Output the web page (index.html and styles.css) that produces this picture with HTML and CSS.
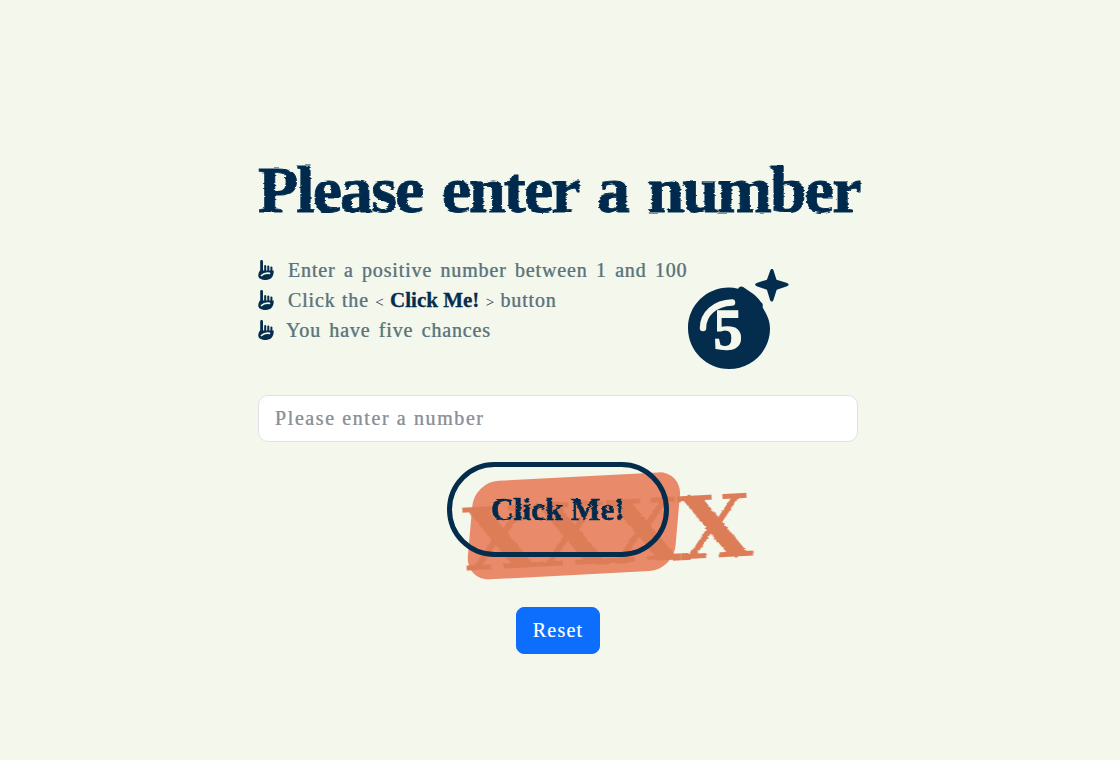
FILE: index.html
```html
<!DOCTYPE html>
<html lang="en">
<head>
<meta charset="utf-8">
<title>Guess the number</title>
<link rel="stylesheet" href="styles.css">
</head>
<body>
<svg class="defs" width="0" height="0" aria-hidden="true">
  <defs>
    <filter id="rough" x="-5%" y="-5%" width="110%" height="110%">
      <feTurbulence type="fractalNoise" baseFrequency="0.05 0.5" numOctaves="2" seed="4" result="n"/>
      <feDisplacementMap in="SourceGraphic" in2="n" scale="3" xChannelSelector="R" yChannelSelector="A"/>
    </filter>
    <symbol id="hand" viewBox="0 0 16 20">
      <rect fill="#042c4d" x="2.2" y="0" width="2.8" height="12" rx="1.4"/>
      <rect fill="#042c4d" x="6.200" y="5" width="2" height="7" rx="1"/>
      <rect fill="#042c4d" x="9.300" y="5.500" width="2" height="7" rx="1"/>
      <rect fill="#042c4d" x="12.400" y="6.500" width="2" height="6" rx="1"/>
      <path fill="#042c4d" d="M2 10.500h13.600C16.200 16 13 20 8 20 3 20 0 18 .3 15c.2-1.800.7-3.400 1.700-4.500z"/>
      <path fill="none" stroke="#f4f7ec" stroke-width="1.700" stroke-linecap="round" d="M3.500 15.500C5.500 13.500 9 13 11.500 13.300"/>
    </symbol>
  </defs>
</svg>
<main class="page">
  <h1 class="title">Please enter a number</h1>
  <div class="intro">
    <ul class="rules">
      <li class="rule"><svg class="hand"><use href="#hand"/></svg><span>Enter a positive number between 1 and 100</span></li>
      <li class="rule rule-cta"><svg class="hand"><use href="#hand"/></svg><span>Click the <span class="mark">&lt;</span> <strong class="strong">Click Me!</strong> <span class="mark">&gt;</span> button</span></li>
      <li class="rule rule-tight"><svg class="hand"><use href="#hand"/></svg><span>You have five chances</span></li>
    </ul>
    <svg class="bomb" viewBox="0 0 102 102" aria-label="Five chances left" role="img">
      <path fill="#042c4d" d="M41 19.500c3 0 6 .4 9 1.300 1.800-2.700 3.500-2.800 5.500-1.500l9.500 6.500c2.300 1.500 5.500 4.800 8 8.500 1.700 1 2.300 3 1.500 4.700C76.500 43.700 82 50 82 60.500 82 83 63.600 101 41 101S0 82.600 0 60 18.400 19.500 41 19.500z"/>
      <path fill="#042c4d" d="M84 1c.8 0 1.300.6 1.700 2l2.800 8.700 9.900 3c1.400.5 2.200 1.100 2.200 1.900 0 .9-.8 1.500-2.200 2l-9.700 3.100-3.100 9.700c-.4 1.400-1 2.200-1.800 2.200-.9 0-1.400-.8-1.900-2.200l-3-9.700-9.500-3.100c-1.400-.5-2.200-1.100-2.200-2 0-.8.800-1.400 2.200-1.900l9.500-3 3.200-8.700c.4-1.400.9-2 1.900-2z"/>
      <path fill="none" stroke="#f4f7ec" stroke-width="6.500" stroke-linecap="round" d="M15 60c0-14 12-25 29-25.500"/>
      <text class="bomb-digit" x="40" y="81">5</text>
    </svg>
  </div>
  <input class="field" type="text" placeholder="Please enter a number">
  <div class="action">
    <div class="stamp" aria-hidden="true">
      <div class="stamp-box"></div>
      <div class="stamp-x">XXXX</div>
    </div>
    <button class="click" type="button"><span class="click-label">Click Me!</span></button>
  </div>
  <button class="reset" type="button">Reset</button>
</main>
</body>
</html>
```
FILE: styles.css
```css
* { box-sizing: border-box; }
html, body { margin: 0; height: 100%; }
body {
  background: #f4f7ec;
  color: #042c4d;
  font-family: "Liberation Serif", "DejaVu Serif", serif;
}
.defs { position: absolute; }
.page {
  width: 600px;
  margin: 0 auto;
  transform: translateX(-2px);
  padding-top: 151px;
  display: flex;
  flex-direction: column;
  align-items: center;
}
.title {
  margin: 0 0 26px;
  width: 100%;
  text-align: center;
  white-space: nowrap;
  font-size: 66px;
  line-height: 78px;
  font-weight: 700;
  letter-spacing: -1.95px;
  word-spacing: 5px;
  -webkit-text-stroke: 0.8px #042c4d;
  filter: url(#rough);
}
.intro {
  width: 100%;
  display: flex;
  align-items: flex-start;
  height: 140px;
}
.rules {
  list-style: none;
  margin: 0;
  padding: 0;
  width: 430px;
  flex: none;
}
.rule {
  display: flex;
  align-items: center;
  height: 30px;
  font-size: 20px;
  letter-spacing: 0.85px;
  word-spacing: 2.5px;
  white-space: nowrap;
  gap: 14px;
  color: #5a7482;
  text-shadow: 0.6px 0 rgba(205, 130, 50, 0.45), -0.6px 0 rgba(30, 165, 200, 0.45);
}
.rule-cta { word-spacing: 0.5px; }
.rule-tight { gap: 12px; }
.hand { width: 16px; height: 20px; flex: none; }
.mark { font-size: 15px; letter-spacing: 0; color: #042c4d; text-shadow: none; }
.strong { font-size: 21px; font-weight: 700; letter-spacing: 0; word-spacing: 0; color: #042c4d; text-shadow: none; -webkit-text-stroke: 0.3px #042c4d; }
.bomb { width: 102px; height: 102px; flex: none; margin-top: 13px; }
.bomb-digit {
  font-family: "Liberation Serif", serif;
  font-weight: 700;
  font-size: 58px;
  fill: #f4f7ec;
  stroke: #f4f7ec;
  stroke-width: 1.4px;
  text-anchor: middle;
}
.field {
  width: 100%;
  height: 47px;
  padding: 0 16px;
  border: 1px solid #dee2e6;
  border-radius: 10px;
  background: #fff;
  font-family: inherit;
  font-size: 20px;
  letter-spacing: 1.6px;
  outline: none;
}
.field::placeholder {
  color: #8b9197;
  opacity: 1;
  text-shadow: 0.5px 0 rgba(205, 150, 80, 0.4), -0.5px 0 rgba(70, 140, 220, 0.4);
}
.action {
  position: relative;
  margin-top: 20px;
  width: 222px;
  height: 95px;
}
.stamp { position: absolute; left: 18px; top: 10px; width: 290px; height: 110px; transform: rotate(-3deg); transform-origin: 50% 50%; }
.stamp-box {
  position: absolute;
  left: 5px;
  top: 3px;
  width: 208px;
  height: 98px;
  border-radius: 24px;
  background: #e98b6a;
  transform: skewX(-8deg);
}
.stamp-x {
  position: absolute;
  left: -2px;
  top: 9px;
  font-family: "DejaVu Serif", serif;
  font-size: 86px;
  line-height: 104px;
  font-weight: 700;
  letter-spacing: -1.5px;
  color: #dd7d58;
  transform: scaleX(1.1);
  transform-origin: 0 50%;
  filter: url(#rough);
}
.click {
  position: relative;
  display: block;
  width: 100%;
  height: 100%;
  padding: 0;
  border: 5px solid #042c4d;
  border-radius: 48px;
  background: transparent;
  color: #042c4d;
  font-family: inherit;
  font-weight: 700;
  font-size: 31.5px;
}
.click-label {
  display: inline-block;
  -webkit-text-stroke: 0.5px #042c4d;
  filter: url(#rough);
}
.reset {
  margin-top: 50px;
  width: 84px;
  height: 47px;
  border: 1px solid #0d6efd;
  border-radius: 8px;
  background: #0d6efd;
  color: #fff;
  font-family: inherit;
  font-size: 20px;
  letter-spacing: 1.2px;
  -webkit-text-stroke: 0.2px #fff;
}
```
